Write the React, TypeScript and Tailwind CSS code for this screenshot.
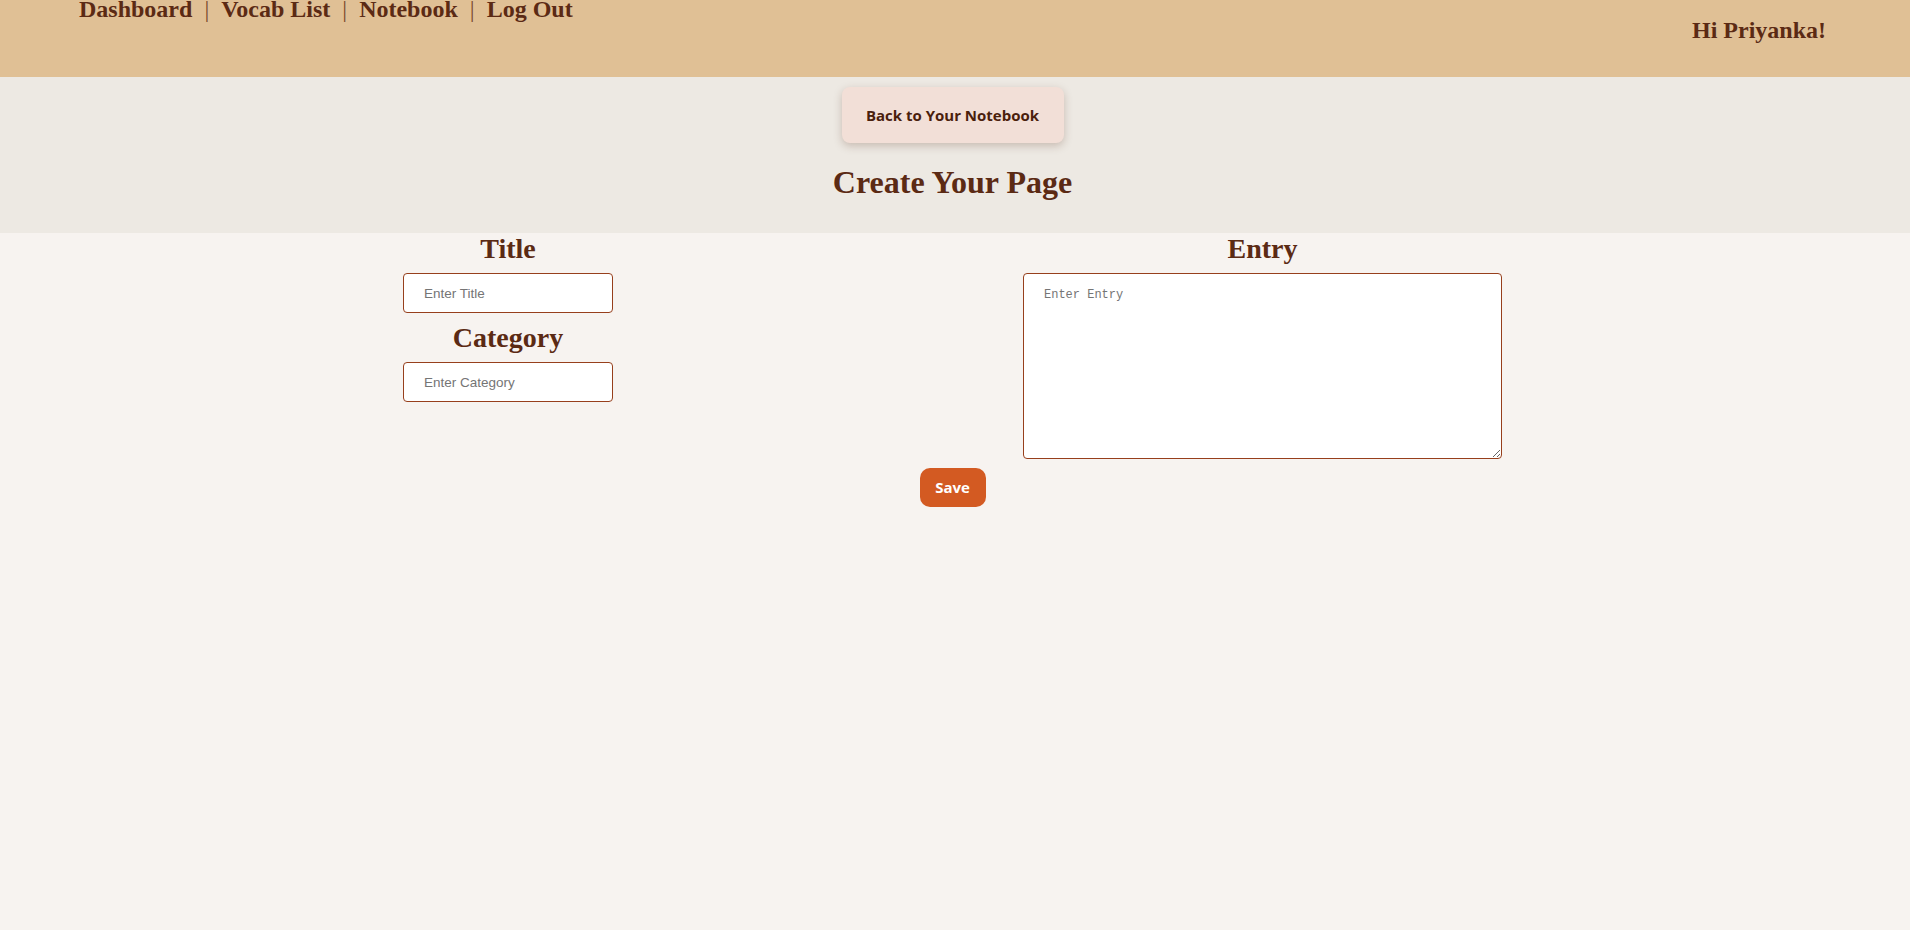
import React from 'react'

const serif = { fontFamily: '"Liberation Serif", "Times New Roman", serif' }

function NavLinks() {
  const links = ['Dashboard', 'Vocab List', 'Notebook', 'Log Out']
  return (
    <nav className="flex items-start pl-[79px] -mt-[4px] text-[24px] leading-[27px] font-bold text-[#5b2a14]">
      {links.map((l, i) => (
        <React.Fragment key={l}>
          {i > 0 && <span className="mx-[12px] font-normal text-[#7a4a2e] leading-[27px]">|</span>}
          <a href="#">{l}</a>
        </React.Fragment>
      ))}
    </nav>
  )
}

export default function App() {
  return (
    <div className="min-h-screen bg-[#f7f3f0]" style={serif}>
      <header className="h-[77px] bg-[#e0c095] flex justify-between">
        <NavLinks />
        <div className="pt-[17px] pr-[84px] text-[24px] leading-[27px] font-bold text-[#5b2a14]">Hi Priyanka!</div>
      </header>

      <section className="h-[156px] bg-[#ede9e3] flex flex-col items-center pt-[10px] pr-[5px]">
        <button
          className="w-[222px] h-[56px] rounded-[8px] bg-[#f2dfd7] text-[15px] font-bold text-[#4a200c] shadow-[0_3px_8px_rgba(90,50,30,0.25)]"
          style={{ fontFamily: '"Open Sans", "Noto Sans", sans-serif' }}
        >
          Back to Your Notebook
        </button>
        <h1 className="mt-[22px] text-[32px] leading-[35px] font-bold text-[#5b2a14]">Create Your Page</h1>
      </section>

      <main className="flex flex-col items-center pr-[5px]">
        <div className="flex gap-[410px]">
          <div className="flex flex-col items-center">
            <h2 className="text-[28px] leading-[31px] font-bold text-[#5b2a14]">Title</h2>
            <input
              placeholder="Enter Title"
              className="mt-[9px] w-[210px] h-[40px] px-[20px] rounded-[4px] border border-[#973f1c] bg-white text-[13.5px] placeholder:text-[#757575] outline-none"
              style={{ fontFamily: '"Liberation Sans", Arial, sans-serif' }}
            />
            <h2 className="mt-[9px] text-[28px] leading-[31px] font-bold text-[#5b2a14]">Category</h2>
            <input
              placeholder="Enter Category"
              className="mt-[9px] w-[210px] h-[40px] px-[20px] rounded-[4px] border border-[#973f1c] bg-white text-[13.5px] placeholder:text-[#757575] outline-none"
              style={{ fontFamily: '"Liberation Sans", Arial, sans-serif' }}
            />
          </div>
          <div className="flex flex-col items-center">
            <h2 className="text-[28px] leading-[31px] font-bold text-[#5b2a14]">Entry</h2>
            <textarea
              placeholder="Enter Entry"
              className="mt-[9px] w-[479px] h-[186px] px-[20px] pt-[12px] rounded-[4px] border border-[#973f1c] bg-white text-[12px] placeholder:text-[#757575] outline-none"
              style={{ fontFamily: '"Liberation Mono", "DejaVu Sans Mono", monospace' }}
            />
          </div>
        </div>
        <button
          className="mt-[9px] w-[66px] h-[39px] rounded-[10px] bg-[#d35a22] text-white text-[15px] font-bold"
          style={{ fontFamily: '"Open Sans", "Noto Sans", sans-serif' }}
        >
          Save
        </button>
      </main>
    </div>
  )
}
